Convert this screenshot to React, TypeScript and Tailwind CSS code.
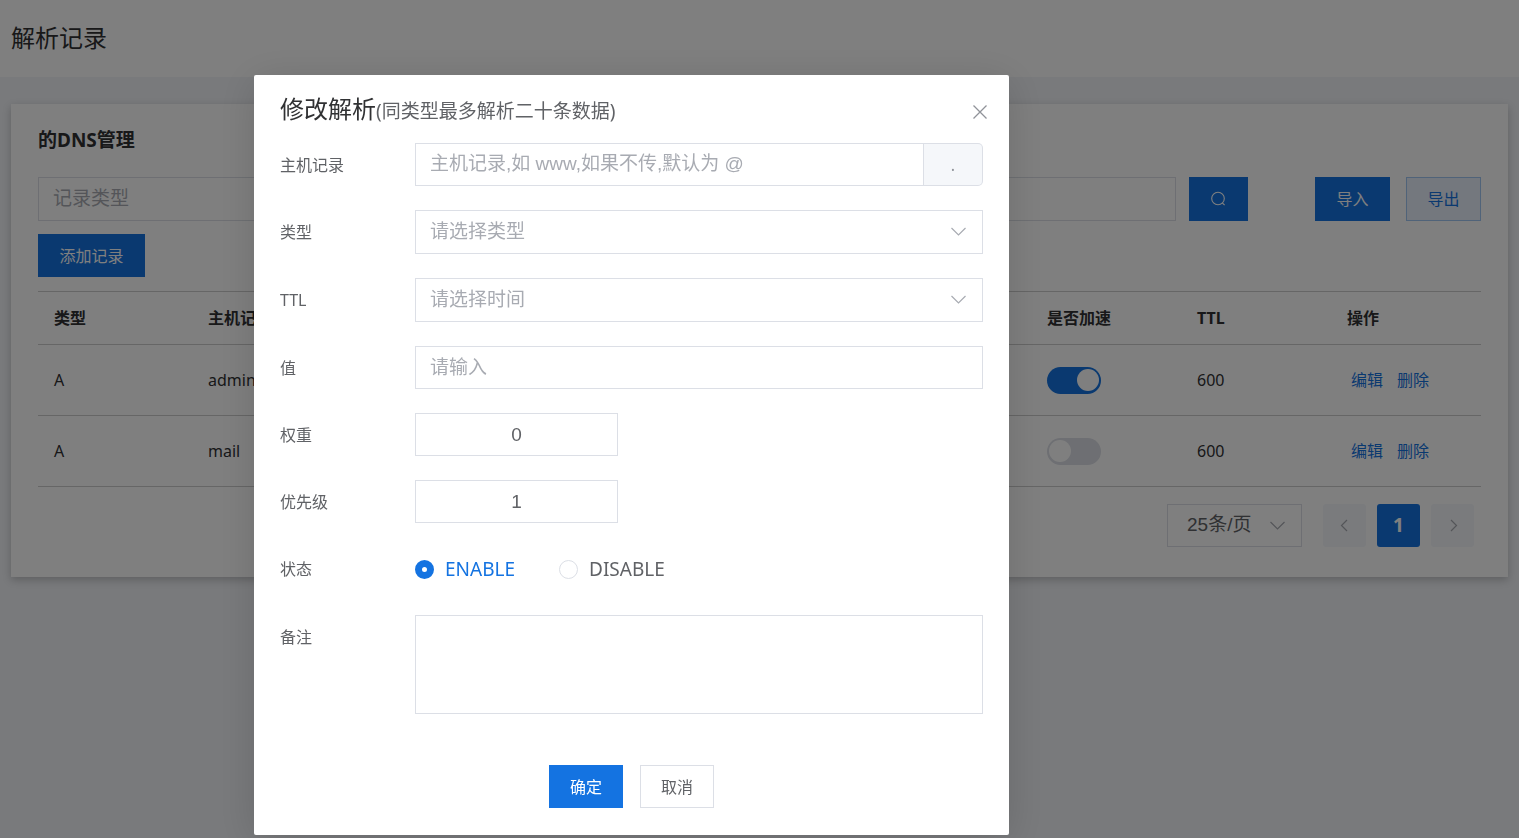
import { useState } from "react"
import type { ReactNode } from "react"

interface DnsRecord {
  id: number
  type: string
  host: string
  accelerated: boolean
  ttl: number
}

const initialRecords: DnsRecord[] = [
  { id: 1, type: "A", host: "admin", accelerated: true, ttl: 600 },
  { id: 2, type: "A", host: "mail", accelerated: false, ttl: 600 },
]

const control = "border border-[#dcdfe6] bg-white px-[14px] text-[19px] text-[#606266] outline-none placeholder:text-[#a8abb2]"
const controlFont = "font-['Liberation_Sans','Noto_Sans_CJK_SC',sans-serif]"

function ChevronDown() {
  return (
    <svg
      viewBox="0 0 16 16"
      className="pointer-events-none absolute top-1/2 right-4 size-4 -translate-y-1/2"
      fill="none"
      stroke="#a8abb2"
      strokeWidth="1.2"
    >
      <path d="M0.5 4 7.5 11 14.5 4" />
    </svg>
  )
}

function FormRow({ label, htmlFor, children }: { label: string; htmlFor: string; children: ReactNode }) {
  return (
    <div className="flex">
      <label htmlFor={htmlFor} className="h-[43px] w-[135px] shrink-0 text-base leading-[45px] text-[#606266]">
        {label}
      </label>
      <div className="flex min-w-0 flex-1">{children}</div>
    </div>
  )
}

function SelectField({ id, placeholder, options }: { id: string; placeholder: string; options: string[] }) {
  return (
    <div className="relative flex-1">
      <select
        id={id}
        defaultValue=""
        className={`${control} ${controlFont} block h-11 w-full appearance-none text-[#a8abb2]!`}
      >
        <option value="" disabled hidden>
          {placeholder}
        </option>
        {options.map((option) => (
          <option key={option} value={option}>
            {option}
          </option>
        ))}
      </select>
      <ChevronDown />
    </div>
  )
}

function EditDialog() {
  const [status, setStatus] = useState("ENABLE")
  const [weight, setWeight] = useState("0")
  const [priority, setPriority] = useState("1")

  return (
    <div className="fixed inset-0 flex items-start justify-center bg-black/50 pt-[75px] pr-64">
      <div
        role="dialog"
        aria-labelledby="dialog-title"
        className="relative w-full max-w-[755px] rounded-[2px] bg-white px-[26px] pt-[18px] pb-[27px] shadow-[0_6px_40px_rgba(0,0,0,0.14)]"
      >
        <h2 id="dialog-title" className="h-8 text-2xl leading-8 text-[#303133]">
          修改解析<span className="text-[19px] text-[#606266]">(同类型最多解析二十条数据)</span>
        </h2>
        <button type="button" aria-label="关闭" className="absolute top-[27px] right-[19px]">
          <svg viewBox="0 0 20 20" className="size-5" fill="none" stroke="#909399" strokeWidth="1.3">
            <path d="M3.5 3.5 16.5 16.5M16.5 3.5 3.5 16.5" />
          </svg>
        </button>

        <form className="mt-[18px] flex flex-col gap-6" onSubmit={(e) => e.preventDefault()}>
          <FormRow label="主机记录" htmlFor="host">
            <div className="flex h-[43px] flex-1">
              <input
                id="host"
                type="text"
                placeholder="主机记录,如 www,如果不传,默认为 @"
                className={`${control} ${controlFont} min-w-0 flex-1`}
              />
              <span className="flex w-[59px] items-center justify-center rounded-r-[5px] border border-l-0 border-[#dcdfe6] bg-[#f5f7fa] text-base text-[#909399]">
                .
              </span>
            </div>
          </FormRow>
          <FormRow label="类型" htmlFor="type">
            <SelectField id="type" placeholder="请选择类型" options={["A", "CNAME", "MX", "TXT"]} />
          </FormRow>
          <FormRow label="TTL" htmlFor="ttl">
            <SelectField id="ttl" placeholder="请选择时间" options={["600", "1800", "3600"]} />
          </FormRow>
          <FormRow label="值" htmlFor="value">
            <input
              id="value"
              type="text"
              placeholder="请输入"
              className={`${control} ${controlFont} h-[43px] min-w-0 flex-1`}
            />
          </FormRow>
          <FormRow label="权重" htmlFor="weight">
            <input
              id="weight"
              type="text"
              inputMode="numeric"
              value={weight}
              onChange={(e) => setWeight(e.target.value)}
              className={`${control} ${controlFont} h-[43px] w-[203px] text-center`}
            />
          </FormRow>
          <FormRow label="优先级" htmlFor="priority">
            <input
              id="priority"
              type="text"
              inputMode="numeric"
              value={priority}
              onChange={(e) => setPriority(e.target.value)}
              className={`${control} ${controlFont} h-[43px] w-[203px] text-center`}
            />
          </FormRow>
          <FormRow label="状态" htmlFor="status-ENABLE">
            <div className="flex h-11 items-center gap-11">
              {["ENABLE", "DISABLE"].map((option) => (
                <label
                  key={option}
                  className="flex items-center gap-[11px] text-[19px] text-[#606266] has-checked:text-[#1473e1]"
                >
                  <input
                    id={`status-${option}`}
                    type="radio"
                    name="status"
                    checked={status === option}
                    onChange={() => setStatus(option)}
                    className="size-[19px] appearance-none rounded-full border border-[#dcdfe6] bg-white checked:border-[7px] checked:border-[#1473e1]"
                  />
                  {option}
                </label>
              ))}
            </div>
          </FormRow>
          <FormRow label="备注" htmlFor="remark">
            <textarea id="remark" className={`${control} ${controlFont} h-[99px] flex-1 resize-none py-2`} />
          </FormRow>

          <div className="mt-[27px] flex justify-center gap-[17px]">
            <button type="submit" className="h-[43px] w-[74px] bg-[#1473e1] text-base text-white">
              确定
            </button>
            <button type="button" className="h-[43px] w-[74px] border border-[#dcdfe6] text-base text-[#606266]">
              取消
            </button>
          </div>
        </form>
      </div>
    </div>
  )
}

export default function App() {
  const [records, setRecords] = useState<DnsRecord[]>(initialRecords)

  const toggleAcceleration = (id: number) => {
    setRecords(records.map((r) => (r.id === id ? { ...r, accelerated: !r.accelerated } : r)))
  }

  return (
    <div className="min-h-screen bg-[#f2f4f8] font-['Noto_Sans','Noto_Sans_CJK_SC',sans-serif] text-base text-[#303133]">
      <header className="bg-white px-[11px] pt-[21px] pb-[23px]">
        <h1 className="text-2xl leading-[33px]">解析记录</h1>
      </header>

      <main className="px-[11px] pt-[27px]">
        <section className="bg-white px-[27px] pt-5 pb-[30px] shadow-[0_3px_8px_rgba(0,0,0,0.22)]">
          <h2 className="text-[19px] leading-8 font-bold">的DNS管理</h2>

          <div className="mt-[21px] flex">
            <div className="flex flex-1 gap-[13px]">
              <input
                type="text"
                aria-label="记录类型"
                placeholder="记录类型"
                className={`${control} ${controlFont} h-11 min-w-0 flex-1`}
              />
              <input type="text" aria-label="主机记录" className={`${control} ${controlFont} h-11 min-w-0 flex-1`} />
              <button
                type="button"
                aria-label="搜索"
                className="flex h-11 w-[59px] items-center justify-center bg-[#1473e1]"
              >
                <svg viewBox="0 0 16 16" className="size-4" fill="none" stroke="white" strokeWidth="1.1">
                  <circle cx="7" cy="7.5" r="6.3" />
                  <path d="M11.4 12 13.6 14.2" />
                </svg>
              </button>
            </div>
            <div className="ml-[67px] flex gap-4">
              <button type="button" className="h-11 w-[75px] bg-[#1473e1] text-white">
                导入
              </button>
              <button type="button" className="h-11 w-[75px] border border-[#a1c7f3] bg-[#e8f1fc] text-[#1473e1]">
                导出
              </button>
            </div>
          </div>

          <button type="button" className="mt-[13px] block h-[43px] w-[107px] bg-[#1473e1] text-white">
            添加记录
          </button>

          <table className="mt-[14px] w-full table-fixed border-collapse text-left">
            <colgroup>
              <col className="w-[154px]" />
              <col />
              <col className="w-[150px]" />
              <col className="w-[150px]" />
              <col className="w-[150px]" />
            </colgroup>
            <thead>
              <tr className="h-[53px] border-y border-[#ccc]">
                {["类型", "主机记录", "是否加速", "TTL", "操作"].map((heading) => (
                  <th key={heading} className="px-4 font-bold">
                    {heading}
                  </th>
                ))}
              </tr>
            </thead>
            <tbody>
              {records.map((record) => (
                <tr key={record.id} className="h-[71px] border-b border-[#ccc]">
                  <td className="px-4">{record.type}</td>
                  <td className="px-4">{record.host}</td>
                  <td className="px-4">
                    <input
                      type="checkbox"
                      role="switch"
                      aria-label="是否加速"
                      checked={record.accelerated}
                      onChange={() => toggleAcceleration(record.id)}
                      className="flex h-[27px] w-[54px] appearance-none items-center rounded-full bg-[#dcdfe6] px-0.5 before:size-[22px] before:rounded-full before:bg-white checked:justify-end checked:bg-[#1473e1]"
                    />
                  </td>
                  <td className="px-4">{record.ttl}</td>
                  <td className="px-4">
                    <div className="flex gap-[14px] pl-1 text-[#1473e1]">
                      <button type="button">编辑</button>
                      <button type="button">删除</button>
                    </div>
                  </td>
                </tr>
              ))}
            </tbody>
          </table>

          <div className="mt-[17px] flex justify-end gap-[11px] pr-[7px]">
            <div className="relative mr-[10px] w-[135px]">
              <select
                aria-label="每页条数"
                className={`${control} ${controlFont} block h-[43px] w-full appearance-none pl-[19px]!`}
              >
                <option>25条/页</option>
                <option>50条/页</option>
              </select>
              <ChevronDown />
            </div>
            <button
              type="button"
              aria-label="上一页"
              className="flex size-[43px] items-center justify-center rounded-[3px] bg-[#f5f7fa]"
            >
              <svg viewBox="0 0 16 16" className="size-4" fill="none" stroke="#a8abb2" strokeWidth="1.2">
                <path d="M10 2 4.5 7.5 10 13" />
              </svg>
            </button>
            <button type="button" className="size-[43px] rounded-[3px] bg-[#1473e1] text-[19px] font-bold text-white">
              1
            </button>
            <button
              type="button"
              aria-label="下一页"
              className="flex size-[43px] items-center justify-center rounded-[3px] bg-[#f5f7fa]"
            >
              <svg viewBox="0 0 16 16" className="size-4" fill="none" stroke="#a8abb2" strokeWidth="1.2">
                <path d="M6 2 11.5 7.5 6 13" />
              </svg>
            </button>
          </div>
        </section>
      </main>

      <EditDialog />
    </div>
  )
}
